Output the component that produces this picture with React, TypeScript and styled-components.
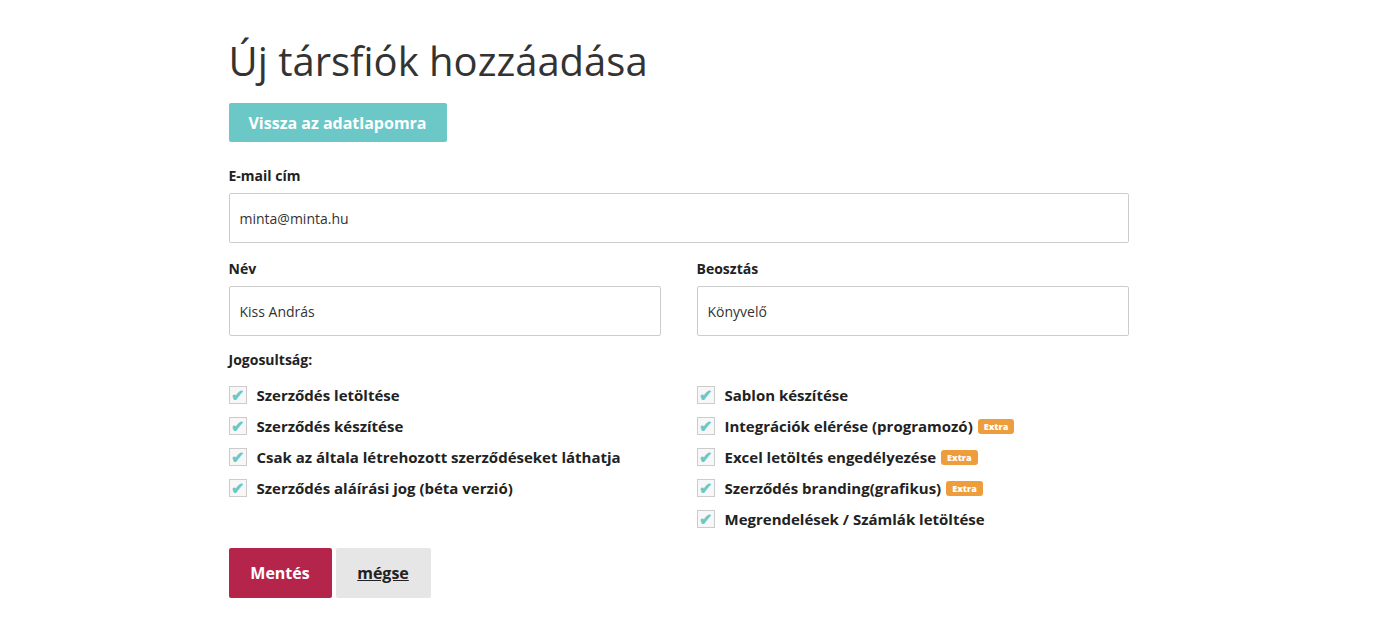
import React from "react";
import styled, { createGlobalStyle } from "styled-components";

const Global = createGlobalStyle`
  body { margin: 0; font-family: "Open Sans", sans-serif; color: #222; background: #fff; }
  * { box-sizing: border-box; }
`;
const Page = styled.div`width: 900px; margin: 0 auto; padding-top: 34px; position: relative; left: -17px;`;
const Title = styled.h1`font-size: 40px; font-weight: 400; margin: 0 0 15px; line-height: 54px; color: #333;`;
const BackBtn = styled.button`background: #6cc7c7; color: #fff; border: 0; border-radius: 2px; font: 700 16px "Open Sans", sans-serif; height: 39px; width: 218px; cursor: pointer;`;
const Label = styled.div<{ $top?: number; $bottom?: number }>`font-size: 14px; font-weight: 700; margin: ${p => p.$top ?? 16}px 0 ${p => p.$bottom ?? 8}px; line-height: 19px;`;
const Input = styled.input`width: 100%; height: 50px; border: 1px solid #ccc; border-radius: 2px; padding: 0 10px; font: 14px "Open Sans", sans-serif; color: #333;`;
const Row = styled.div`display: grid; grid-template-columns: 1fr 1fr; column-gap: 36px;`;
const Field = styled.div``;
const Checks = styled.div`display: grid; grid-template-columns: 1fr 1fr; column-gap: 36px; margin-top: 16px;`;
const Col = styled.div`display: flex; flex-direction: column; gap: 11px;`;
const Item = styled.div`display: flex; align-items: center; gap: 10px; font-size: 15px; font-weight: 700; height: 20px;`;
const Box = styled.span`width: 18px; height: 18px; border: 1px solid #ccc; background: #f7f7f7; color: #6cc7c7; display: flex; align-items: center; justify-content: center; font-size: 16px; line-height: 1;`;
const Badge = styled.span`background: #ed9d3c; color: #fff; font-size: 9px; font-weight: 800; border-radius: 3px; padding: 1px 6px; margin-left: -5px; line-height: 13px;`;
const Actions = styled.div`display: flex; gap: 4px; margin-top: 19px;`;
const Save = styled.button`background: #b5244a; color: #fff; border: 0; border-radius: 2px; font: 700 16px "Open Sans", sans-serif; height: 50px; width: 103px;`;
const Cancel = styled.button`background: #e6e6e6; color: #222; border: 0; border-radius: 2px; font: 700 16px "Open Sans", sans-serif; height: 50px; width: 95px; text-decoration: underline;`;

const C = ({ t, extra }: { t: string; extra?: boolean }) => (
  <Item><Box>✔</Box>{t}{extra && <Badge>Extra</Badge>}</Item>
);

export default function App() {
  return (
    <Page>
      <Global />
      <Title>Új társfiók hozzáadása</Title>
      <BackBtn>Vissza az adatlapomra</BackBtn>
      <Label $top={24}>E-mail cím</Label>
      <Input defaultValue="minta@minta.hu" />
      <Row>
        <Field><Label>Név</Label><Input defaultValue="Kiss András" /></Field>
        <Field><Label>Beosztás</Label><Input defaultValue="Könyvelő" /></Field>
      </Row>
      <Label $top={14} $bottom={0}>Jogosultság:</Label>
      <Checks>
        <Col>
          <C t="Szerződés letöltése" />
          <C t="Szerződés készítése" />
          <C t="Csak az általa létrehozott szerződéseket láthatja" />
          <C t="Szerződés aláírási jog (béta verzió)" />
        </Col>
        <Col>
          <C t="Sablon készítése" />
          <C t="Integrációk elérése (programozó)" extra />
          <C t="Excel letöltés engedélyezése" extra />
          <C t="Szerződés branding(grafikus)" extra />
          <C t="Megrendelések / Számlák letöltése" />
        </Col>
      </Checks>
      <Actions><Save>Mentés</Save><Cancel>mégse</Cancel></Actions>
    </Page>
  );
}
